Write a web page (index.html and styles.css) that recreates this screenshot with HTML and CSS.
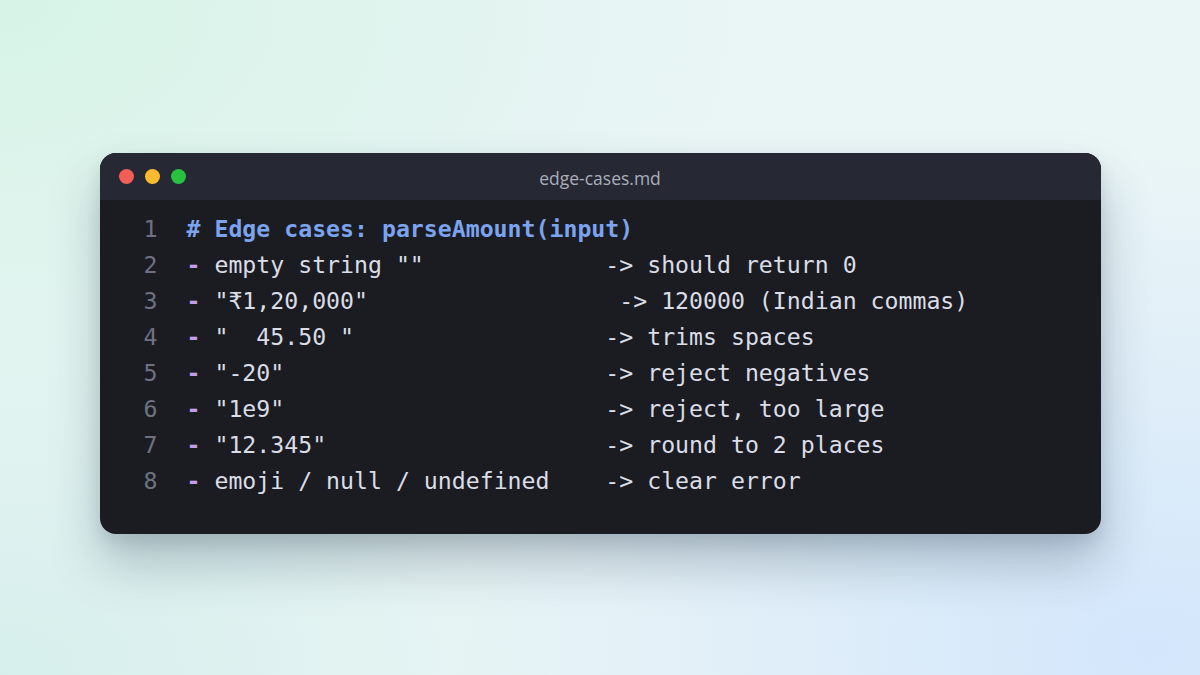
FILE: index.html
```html
<!DOCTYPE html>
<html lang="en">
<head>
<meta charset="utf-8">
<title>edge-cases.md</title>
<link rel="stylesheet" href="styles.css">
</head>
<body>
<div class="stage">
  <div class="window">
    <div class="titlebar">
      <div class="dots">
        <span class="dot red"></span>
        <span class="dot yellow"></span>
        <span class="dot green"></span>
      </div>
      <div class="title">edge-cases.md</div>
    </div>
    <div class="code">
      <div class="line"><span class="ln">1</span><span class="src head"># Edge cases: parseAmount(input)</span></div>
      <div class="line"><span class="ln">2</span><span class="src"><span class="dash">-</span> empty string ""             -&gt; should return 0</span></div>
      <div class="line"><span class="ln">3</span><span class="src"><span class="dash">-</span> "₹1,20,000"                  -&gt; 120000 (Indian commas)</span></div>
      <div class="line"><span class="ln">4</span><span class="src"><span class="dash">-</span> "  45.50 "                  -&gt; trims spaces</span></div>
      <div class="line"><span class="ln">5</span><span class="src"><span class="dash">-</span> "-20"                       -&gt; reject negatives</span></div>
      <div class="line"><span class="ln">6</span><span class="src"><span class="dash">-</span> "1e9"                       -&gt; reject, too large</span></div>
      <div class="line"><span class="ln">7</span><span class="src"><span class="dash">-</span> "12.345"                    -&gt; round to 2 places</span></div>
      <div class="line"><span class="ln">8</span><span class="src"><span class="dash">-</span> emoji / null / undefined    -&gt; clear error</span></div>
    </div>
  </div>
</div>
</body>
</html>
```
FILE: styles.css
```css
html, body {
  margin: 0;
  padding: 0;
  width: 1200px;
  height: 675px;
  overflow: hidden;
}
body {
  background:
    radial-gradient(ellipse 700px 500px at 1150px 650px, #d3e6fb 0%, rgba(211,230,251,0) 100%),
    radial-gradient(ellipse 750px 520px at 0px 0px, #d6f3e6 0%, rgba(214,243,230,0) 100%),
    radial-gradient(ellipse 600px 400px at 0px 675px, #d6efec 0%, rgba(214,239,236,0) 100%),
    #eaf5f6;
  font-family: "DejaVu Sans Mono", monospace;
}
.stage {
  display: flex;
  justify-content: center;
  padding-top: 153px;
}
.window {
  width: 1001px;
  border-radius: 16px;
  overflow: hidden;
  background: #1b1c22;
  box-shadow: 0 30px 50px rgba(40, 60, 80, 0.28), 0 8px 16px rgba(40, 60, 80, 0.12);
}
.titlebar {
  position: relative;
  height: 47px;
  background: #262833;
  display: flex;
  align-items: center;
}
.dots {
  display: flex;
  gap: 11px;
  padding-left: 19px;
}
.dot {
  width: 15px;
  height: 15px;
  border-radius: 50%;
  display: block;
}
.red { background: #f25d57; }
.yellow { background: #fbbb2f; }
.green { background: #29c140; }
.title {
  position: absolute;
  left: 0;
  right: 0;
  top: 0;
  line-height: 50px;
  text-align: center;
  font-family: "Open Sans", "Noto Sans", sans-serif;
  font-size: 17.5px;
  color: #a9aebb;
}
.code {
  padding: 10px 0 36px 24px;
}
.line {
  display: flex;
  height: 36px;
  align-items: center;
  font-size: 23.2px;
  white-space: pre;
}
.ln {
  width: 34px;
  text-align: right;
  color: #6d7282;
  margin-right: 29px;
}
.src {
  color: #dadde6;
}
.head {
  color: #7ba3ee;
  font-weight: bold;
}
.dash {
  color: #c49ee8;
  font-weight: bold;
}
```
